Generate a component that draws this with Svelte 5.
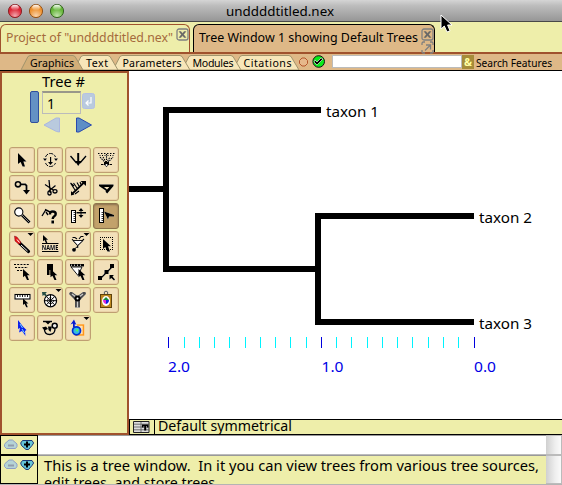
<script>
  const tabs = [
    { t: 'Graphics', w: 44, on: true, x: 30, a: 21, b: 83 },
    { t: 'Text', w: 22, x: 86, a: 74, b: 118 },
    { t: 'Parameters', w: 59, x: 122.5, a: 113, b: 190 },
    { t: 'Modules', w: 41, x: 192.5, a: 182, b: 241 },
    { t: 'Citations', w: 48, x: 243.5, a: 233, b: 299 }
  ];
  const tools = ['arrow', 'reroot', 'collapse', 'fan', 'move', 'cut', 'ladder', 'clade', 'lens', 'query', 'scale', 'measure', 'brush', 'name', 'rotate', 'select', 'polytomy', 'branch', 'wedge', 'nodes', 'ruler', 'wheel', 'join', 'picture', 'magic', 'cycle', 'color'];
  const menus = ['brush', 'rotate', 'wheel', 'color'];
  const ticks = [168, 184, 199, 214, 229, 245, 260, 275, 290, 306, 321, 336, 351, 367, 382, 397, 412, 428, 443, 458, 474];
  const major = [168, 321, 474];
</script>

{#snippet label(text, w, size = 13, h = 18, base = 14)}
  <svg class="label" width={w + 1} height={h}><text x="0" y={base} font-size={size} textLength={w} lengthAdjust="spacingAndGlyphs" xml:space="preserve">{text}</text></svg>
{/snippet}

{#snippet pointer(x, y)}
  <path d="M0 0V8.2L1.9 6.7L4 11H6L4.2 6.2H6.8Z" transform="translate({x} {y})" />
{/snippet}

{#snippet closeBox()}
  <svg width="13" height="13"><rect x="1" y="1" width="11" height="11" rx="2" fill="none" stroke="#808080" stroke-width="1.3" /><path d="M3 3.5H5L6.5 5.5L8 3.5H10L7.6 6.5L10 9.5H8L6.5 7.6L5 9.5H3L5.4 6.5Z" fill="#666" stroke="#666" stroke-width=".4" /></svg>
{/snippet}

{#snippet icon(n)}
  <svg class="icon" width="26" height="26" fill="#000" stroke="none">
    {#if n === 'arrow'}
      <path d="M9 6V17L11.6 15L13.6 19.5H16L14.4 14.5H17.5Z" />
    {:else if n === 'reroot'}
      <path d="M8.5 10Q10 6.5 13.5 6.5Q17 6.5 18.5 10M8.5 16Q10 19.5 13.5 19.5Q17 19.5 18.5 16" fill="none" stroke="#000" stroke-width="1" stroke-dasharray="4 1" /><path d="M13 10H14.2V15H16L13.5 18L11 15H13ZM6 11.5H10L8 14ZM17 11.5H21L19 14Z" />
    {:else if n === 'collapse'}
      <path d="M12.2 6H14.2V14H12.2ZM10 14H16.5L13.2 19Z" /><path d="M5.5 9L11.5 16M21 9L15 16" fill="none" stroke="#000" stroke-width="1.4" />
    {:else if n === 'fan'}
      <path d="M5 6.5h1.5M8 6.5h1.5M11 6.5h1.5M14 6.5h1.5M17 6.5h1.5M20 6.5h1.5M6.5 8.5h1M9 8.5h1M11.5 8.5h1M14.5 8.5h1M17 8.5h1M19.5 8.5h1" stroke="#000" stroke-width="1.2" /><path d="M7 10L13.5 17L20 10M10 10L13.5 16L17 10M13.5 7V15" fill="none" stroke="#000" stroke-width="1.1" stroke-dasharray="1.5 .8" /><path d="M11 15H16V17.5L13.5 20L11 17.5Z" /><circle cx="13.5" cy="18" r="1" fill="#fff" /><path d="M8 17.5H10.5M16.5 17.5H19" stroke="#000" />
    {:else if n === 'move'}
      <circle cx="9" cy="9.3" r="2.6" fill="none" stroke="#000" stroke-width="1.6" /><path d="M11.5 9.3H16.3L17.5 10.5V17" fill="none" stroke="#000" stroke-width="1.8" /><path d="M14 15H21L17.5 19.5Z" />
    {:else if n === 'cut'}
      <path d="M12 5L13.3 18M8 9.5L17 15.5M18.5 10.5L12 16" fill="none" stroke="#000" stroke-width="1.3" /><g fill="none" stroke="#000" stroke-width="1.3"><ellipse cx="12.5" cy="18" rx="1.6" ry="2" /><ellipse cx="18" cy="16.3" rx="2" ry="1.7" /></g>
    {:else if n === 'ladder'}
      <path d="M7 19L19 7.5" fill="none" stroke="#000" stroke-width="1.8" /><path d="M15.5 6H21V11ZM6 16L9.5 19.5L6 20.5Z" /><path d="M5.5 8L10 15M8.5 8L12 13M12 7.5L14 11M15 7L16 9.5M5.5 8L9 11M10 19L14 16" fill="none" stroke="#000" stroke-width="1.2" />
    {:else if n === 'clade'}
      <path d="M6 9.5H20.5V11L14.2 18.5L12.7 17V15.5L6 11ZM11 12L14 14.5L16.3 12Z" fill-rule="evenodd" />
    {:else if n === 'lens'}
      <path d="M13 12L20.5 19.5" stroke="#000" stroke-width="2.8" /><path d="M13 12L20 19" stroke="#888" /><circle cx="9.8" cy="9" r="4.1" fill="#fff" stroke="#000" stroke-width="1.1" />
    {:else if n === 'query'}
      <path d="M5 13L9 6.5M8 6.5L14 9.5M9 9L11 12" fill="none" stroke="#000" stroke-width="1.4" /><path d="M13 11.5Q12.7 8.5 15.7 8.5Q18.7 8.5 18.7 11C18.7 13.8 15.7 12.7 15.7 16" fill="none" stroke="#000" stroke-width="2.5" /><path d="M14.4 17.5h2.6v3h-2.6Z" />
    {:else if n === 'scale' || n === 'measure'}
      <rect x="6.5" y={n === 'scale' ? 7.5 : 5.5} width="4" height={n === 'scale' ? 12 : 14} fill="#fff" stroke="#000" /><path d="M8.5 9.5h2M8.5 11.5h2M8.5 13.5h2M8.5 15.5h2M8.5 17.5h2" stroke="#000" stroke-width=".8" />
      {#if n === 'scale'}<path d="M16 5L18.5 8H16.5V9H21V10.5H16.5V12H18.5L16 15L13.5 12H15.5V10.5H11.5V9H15.5V8H13.5Z" />{:else}<path d="M11 8.5L19 11.3L21 12V13.5L16 13.5L15 16.5Z" />{/if}
    {:else if n === 'brush'}
      <path d="M10.5 12L19.5 20.5" stroke="#000" stroke-width="3.2" stroke-linecap="round" /><path d="M12 14L18.5 20" stroke="#eee" /><path d="M5.5 5L8 6L11.5 10.5V12.5L9.5 13L6 10Z" fill="#e71919" stroke="#700" stroke-width=".5" /><path d="M8 8.5L10.5 11.5" stroke="#fff" />
    {:else if n === 'name'}
      <g transform="translate(6 4) scale(.75)">{@render pointer(0, 0)}</g><path d="M5 12.5H21.5M5 20.5H21.5" stroke="#000" /><text x="4.8" y="19.2" font-size="7.3" font-weight="bold" textLength="16.5" lengthAdjust="spacingAndGlyphs">NAME</text>
    {:else if n === 'rotate'}
      <path d="M7 8L12.7 14.5L19 8M12.7 14V17M7.5 6.5H10L12 8M14 8L16 5.5H18.5" stroke="#000" fill="none" stroke-width="1.1" /><path d="M8 9.5H18L12.7 14.5Z" fill="#fff" stroke="#000" stroke-width=".9" /><circle cx="9" cy="18.8" r="1.9" /><path d="M9.5 18L13 15" stroke="#000" />
    {:else if n === 'select'}
      <path d="M7 6.5H20M7 18.5H20M7.5 8V18M19.5 8V18" stroke="#000" stroke-dasharray="1 1" shape-rendering="crispEdges" /><path d="M10 8V18L12.2 16L14.5 20.5H17L15 15.3H18Z" />
    {:else if n === 'polytomy'}
      <path d="M5 5.5H21M6 8.5H19M8 11.5H15" stroke="#000" stroke-dasharray="2 1.2" />{@render pointer(14, 10)}
    {:else if n === 'branch'}
      <path d="M10 5H16V16H10Z" /><path d="M13 11V17L14 18" stroke="#f2dfb7" fill="none" />{@render pointer(13.5, 10)}
    {:else if n === 'wedge'}
      <path d="M5 5H19V7.5H5Z" /><path d="M6 6.2H18" stroke="#fff" stroke-dasharray="1 2" /><path d="M6 8L13 16.5L17 8Z" fill="#fff" stroke="#000" stroke-width=".9" />{@render pointer(13.5, 10)}
    {:else if n === 'nodes'}
      <path d="M7 20L20 7" stroke="#000" stroke-width="1.2" /><path d="M5 17h4v4H5ZM11.5 11h4v4h-4ZM17 5h4v4h-4ZM16.5 16H21L19.5 17.5L22 20.5L21 21.5L18.3 19L16.5 20.5Z" />
    {:else if n === 'ruler'}
      <rect x="6" y="7.5" width="15" height="4.5" fill="#fff" stroke="#000" stroke-width="1.1" /><path d="M8.5 8V10M11 8V10M13.5 8V10M16 8V10M18.5 8V10" stroke="#000" stroke-width=".9" /><g transform="translate(14 11.5) scale(.8)">{@render pointer(0, 0)}</g>
    {:else if n === 'wheel'}
      <circle cx="13.5" cy="13.7" r="6.1" fill="#fff" stroke="#000" stroke-width="1.2" /><path d="M13.5 8V19.5M7.5 13.7H19.5M9.5 9.7L17.5 17.7M17.5 9.7L9.5 17.7" stroke="#000" /><circle cx="13.5" cy="13.7" r="3" fill="none" stroke="#000" stroke-dasharray="1.5 1" /><path d="M5 5H10L8.5 6.5L10 8.5L9 9.5L7 8L5.5 9Z" fill="#284f43" />
    {:else if n === 'join'}
      <path d="M5 5H7L12.5 9L18 5H20.5L21 7L15 13V20.5H10V13L4 7Z" fill="#4c4c4c" /><path d="M12.5 14V20.5M7 7L11 10M18 7L14 10" stroke="#ccc" stroke-width="1.2" /><circle cx="12.5" cy="11.5" r="3" /><circle cx="12.5" cy="11.5" r="1" fill="#fff" />
    {:else if n === 'picture'}
      <circle cx="13" cy="6" r="1.8" fill="none" stroke="#555" /><rect x="7.5" y="7.5" width="11" height="13" fill="#be8820" stroke="#5e420b" /><ellipse cx="13" cy="14" rx="4" ry="5" fill="#fff" /><path d="M10 13L13 10L16 13Z" fill="#168b3a" /><path d="M10 13H13V17Q10 16 10 13Z" fill="#dc28d7" /><path d="M13 13H16Q16 16 13 17Z" fill="#111de4" />
    {:else if n === 'magic'}
      <path d="M9 5V14L11 13L10 17.5L13 16L16.5 21L16 16L17.5 15L14 11.5Z" fill="#0b20eb" /><path d="M11 9L13.5 13M13 14L15.5 18" stroke="#72d6ff" />
    {:else if n === 'cycle'}
      <path d="M6 6.5H15M7.5 13Q7 19.7 13 19.5Q18 19 18 14" fill="none" stroke="#000" stroke-width="1.4" /><path d="M8 6.5H14L11 9.5ZM5 12.5L9 11.5L11 14L7.5 15.5ZM11 11.5H15L13.5 17L11.5 15Z" /><circle cx="17.7" cy="10.7" r="2.5" fill="#eee" stroke="#000" stroke-width="1.5" />
    {:else if n === 'color'}
      <path d="M12 10H18.5V20H10.5V18" fill="#ffe0b5" stroke="#ff9619" stroke-width="1.6" /><circle cx="11.5" cy="15.8" r="4" fill="#35b9e4" stroke="#002fd1" stroke-width="1.7" /><path d="M5.5 9.5L9 4.5L11.5 10L9.8 9V12H8V8.5Z" fill="#0719cc" /><path d="M10.5 15L13.5 14L12.5 17Z" fill="#5aff47" />
    {/if}
    {#if menus.includes(n)}<path d="M18.5 2H24.5L21.5 5Z" />{/if}
  </svg>
{/snippet}

{#snippet toggles()}
  <svg width="34" height="17"><path d="M3 6.5L7 3H10.5L15 7V9.5L13.5 11.5H4.5L2.5 9.5V7.5Z" fill="#b5d4d6" stroke="#8e9ec4" /><path d="M6 8.5H12" stroke="#929dac" stroke-width="2" /><path d="M20.5 3.5H30L31.6 6L30 8.5L26.5 12.5H24L19.5 8.5L18.7 6Z" fill="#67c5d7" stroke="#1c3979" /><path d="M22 7.5H28M25 4.5V10.5" stroke="#000" stroke-width="2" /></svg>
{/snippet}

<div class="app">
  <header>
    <svg class="lights" width="75" height="21">
      <defs>
        <linearGradient id="shine" x2="0" y2="1"><stop offset="0" stop-color="#fff" stop-opacity=".95" /><stop offset="1" stop-color="#fff" stop-opacity="0" /></linearGradient>
        <radialGradient id="glow" cy=".9" r=".6"><stop offset="0" stop-color="#fff" stop-opacity=".6" /><stop offset="1" stop-color="#fff" stop-opacity="0" /></radialGradient>
      </defs>
      {#each [['#dd2635', '#8a2528', 15], ['#ef9331', '#93541d', 36], ['#65b638', '#386425', 57]] as [c, s, x]}
        <circle cx={x} cy="11" r="6.6" fill={c} stroke={s} /><circle cx={x} cy="11" r="6" fill="url(#glow)" /><ellipse cx={x} cy="7.6" rx="3.8" ry="2.8" fill="url(#shine)" />
      {/each}
    </svg>
    {@render label('unddddtitled.nex', 108, 13.3, 20, 16)}
  </header>
  <nav class="windows">
    <div class="project">{@render label('Project of "unddddtitled.nex"', 167)}{@render closeBox()}</div>
    <div class="treewin">{@render label('Tree Window 1 showing Default Trees', 219)}
      <span class="boxes">{@render closeBox()}<svg width="13" height="13"><path d="M4 1H2L1 2V4M1 9V11L2 12H4M9 1H11L12 2V4M12 9V11L11 12H9" fill="none" stroke="#808080" stroke-width="1.3" /><path d="M4 9.5L9 4.5M5 4H9.5V8.5" fill="none" stroke="#808080" stroke-width="1.3" /></svg></span>
    </div>
  </nav>
  <nav class="features">
    <svg width="332" height="16" class="featuretabs">
      {#each [...tabs].reverse() as t}
        <path d="M{t.a} 16L{t.a + 7} 2.5L{t.a + 9} 1.5H{t.b - 10}L{t.b - 8} 2.5L{t.b} 16Z" fill={t.on ? '#d2ae78' : '#f7e6b9'} stroke="#a0946c" />
        <text x={t.x} y="13" font-size="10.6" textLength={t.w}>{t.t}</text>
      {/each}
      <path d="M302 4.5H305L307.5 7V10L305 12.5H302L299.5 10V7Z" transform="translate(0 -.5)" fill="#e6b88b" stroke="#b4562d" />
      <circle cx="318.7" cy="7.5" r="5.8" fill="#08ec19" stroke="#111" /><path d="M314 8L317 11L323 5L321 4L317 8L315 6Z" fill="#000" stroke="#fff" stroke-width=".6" />
    </svg>
    <div class="field"></div>
    <b class="amp">{@render label('&', 8, 11, 13, 11)}</b>
    {@render label('Search Features', 76, 11, 16, 13)}
  </nav>
  <main>
    <aside>
      <div class="title">{@render label('Tree #', 43, 14)}</div>
      <div class="picker">
        <div class="slider"></div>
        <div>
          <div class="entry"><div class="number">{@render label('1', 8, 14, 20, 16)}</div><svg class="enter" width="13" height="16"><rect x=".5" y=".5" width="12" height="15" rx="2" fill="#b9cade" stroke="#b4c0e4" /><path d="M9 4V10H4M6.5 7.5L4 10L6.5 12.5" fill="none" stroke="#fff" stroke-width="1.2" /></svg></div>
          <svg class="steps" width="52" height="17"><path d="M17.5 1V15L14.5 14.5L2 8L14 1Z" fill="#b9cade" stroke="#abb7df" /><path d="M34.5 1H37L49.5 8L37 15H34.5Z" fill="#5e8ec6" stroke="#2949b0" /></svg>
        </div>
      </div>
      <div class="tools">{#each tools as n}<div class="tool" class:active={n === 'measure'}>{@render icon(n)}</div>{/each}</div>
    </aside>
    <section>
      <svg class="tree" width="433" height="348" viewBox="129 71 433 348">
        <path d="M129 189H166M321 110H166V269H318M474 216H318V322H474" fill="none" stroke="#000" stroke-width="6" />
        {#each [['taxon 1', 326, 117], ['taxon 2', 479, 223], ['taxon 3', 479, 329]] as [t, x, y]}<text {x} {y} font-size="14" textLength="53" lengthAdjust="spacingAndGlyphs">{t}</text>{/each}
        {#each ticks as x}<rect {x} y="337" width="1" height="11" fill={major.includes(x) ? '#0000de' : '#00f4ff'} />{/each}
        {#each ['2.0', '1.0', '0.0'] as t, i}<text x={[168, 321.5, 474][i]} y="372" font-size="14" fill="#0000e6" textLength="22" lengthAdjust="spacingAndGlyphs">{t}</text>{/each}
      </svg>
      <div class="status"><div class="table"><svg width="17" height="12"><path d="M.5 .5H16V11.5H.5Z" fill="#ddd" stroke="#222" /><path d="M1 3.2H16M1 6H16M1 8.8H16M8 1V11" stroke="#555" stroke-width=".8" /><path d="M9 3.5H15.5V6.5H14V5H13.2V9.5H11.2V5H10.5V6.5H9Z" /></svg></div>{@render label('Default symmetrical', 134, 14, 14, 11)}</div>
    </section>
  </main>
  <div class="message blank"><div class="cell">{@render toggles()}</div><div class="body"></div><div class="scroll"></div></div>
  <div class="message"><div class="cell">{@render toggles()}</div><div class="body">{@render label('This is a tree window.  In it you can view trees from various tree sources,', 495, 14, 17, 14)}{@render label('edit trees, and store trees.', 175, 14, 17, 14)}</div><div class="scroll"></div></div>
  <svg class="cursor" width="14" height="21"><path d="M1 1V15L4.3 12L7 18L10 16.8L7.6 11H12Z" fill="#000" stroke="#fff" /></svg>
</div>

<style>
  :global(body) { margin: 0; overflow: hidden; }
  .app, .app * { box-sizing: border-box; }
  .app { width: 562px; height: 485px; overflow: hidden; position: relative; background: #eea; font-family: "Noto Sans", "Open Sans", sans-serif; color: #000; }
  svg { display: block; flex: none; }
  text { white-space: pre; }
  .label { overflow: visible; fill: currentColor; }
  header { height: 22px; display: flex; background: linear-gradient(#d5d5d5, #bebebe 25%, #969696); border-bottom: 1px solid #484848; }
  .lights { margin-right: 151px; }
  .windows { height: 32px; display: flex; gap: 3px; padding-top: 2px; border-bottom: 2px solid #a0522d; }
  .project, .treewin { display: flex; border: 1px solid #a0522d; border-bottom: 0; border-radius: 6px 6px 0 0; height: 28px; }
  .project { width: 190px; padding: 3px 0 0 5px; color: #a56a3c; gap: 2px; }
  .treewin { width: 242px; padding: 3px 0 0 5px; border-color: #000; background: #deb887; gap: 2px; }
  .boxes { display: block; }
  .features { height: 17px; background: #deb887; border-bottom: 1px solid #000; display: flex; }
  .featuretabs text { fill: #000; }
  .field { width: 130px; height: 13px; margin-top: 1px; background: #fff; border: 1px solid #bbb; }
  .amp { width: 12px; height: 14px; margin: 1px 2px 0 0; padding-left: 2px; background: #a68c39; color: #ffffa2; }
  main { display: flex; height: 364px; }
  aside { width: 129px; border: 2px solid #a0522d; background: #eea; }
  .title { padding-left: 40px; height: 17px; }
  .picker { display: flex; height: 57px; padding: 1px 0 0 28px; gap: 3px; }
  .slider { width: 9px; height: 32px; background: #6491c4; border: 1px solid #304f9e; border-radius: 2px; }
  .entry { display: flex; gap: 1px; }
  .number { width: 39px; height: 23px; padding: 0 0 0 4px; border: 1px solid #bbb; border-top: 2px solid #99978a; background: #efefad; }
  .enter { margin-top: 2px; }
  .steps { margin-top: 3px; }
  .tools { display: grid; grid-template-columns: repeat(4, 26px); gap: 2px; padding-left: 7px; }
  .tool { width: 26px; height: 26px; border: 1px solid #bf9f72; border-radius: 3px; background: #f2e0b9; box-shadow: inset 0 0 0 1px #ead3a8; }
  .active { background: #c2a26b; border: 1px solid #8e754c; box-shadow: inset 0 1px 2px #88704e; }
  .icon { margin: -1px; filter: drop-shadow(.7px .7px 0 #fff); }
  section { width: 433px; background: #fff; }
  .status { height: 16px; background: #eea; border: 1px solid #000; border-right: 0; display: flex; }
  .table { width: 25px; height: 14px; padding: 1px 0 0 3px; border-right: 1px solid #000; margin-right: 3px; }
  .message { height: 30px; display: flex; border-bottom: 1px solid #b4b4b4; }
  .blank { height: 20px; border-bottom: 0; }
  .cell { width: 38px; border: 1px solid #000; padding: 1px 0 0 1px; }
  .body { width: 508px; padding: 1px 0 0 6px; overflow: hidden; border-top: 1px solid #999; }
  .blank .body { background: #fff; border-bottom: 1px solid #bbb; }
  .scroll { width: 16px; background: linear-gradient(90deg, #d0d0d0, #eee 60%, #fafafa); border: 1px solid #bbb; border-left: 0; }
  .cursor { position: absolute; left: 440px; top: 14px; }
</style>
